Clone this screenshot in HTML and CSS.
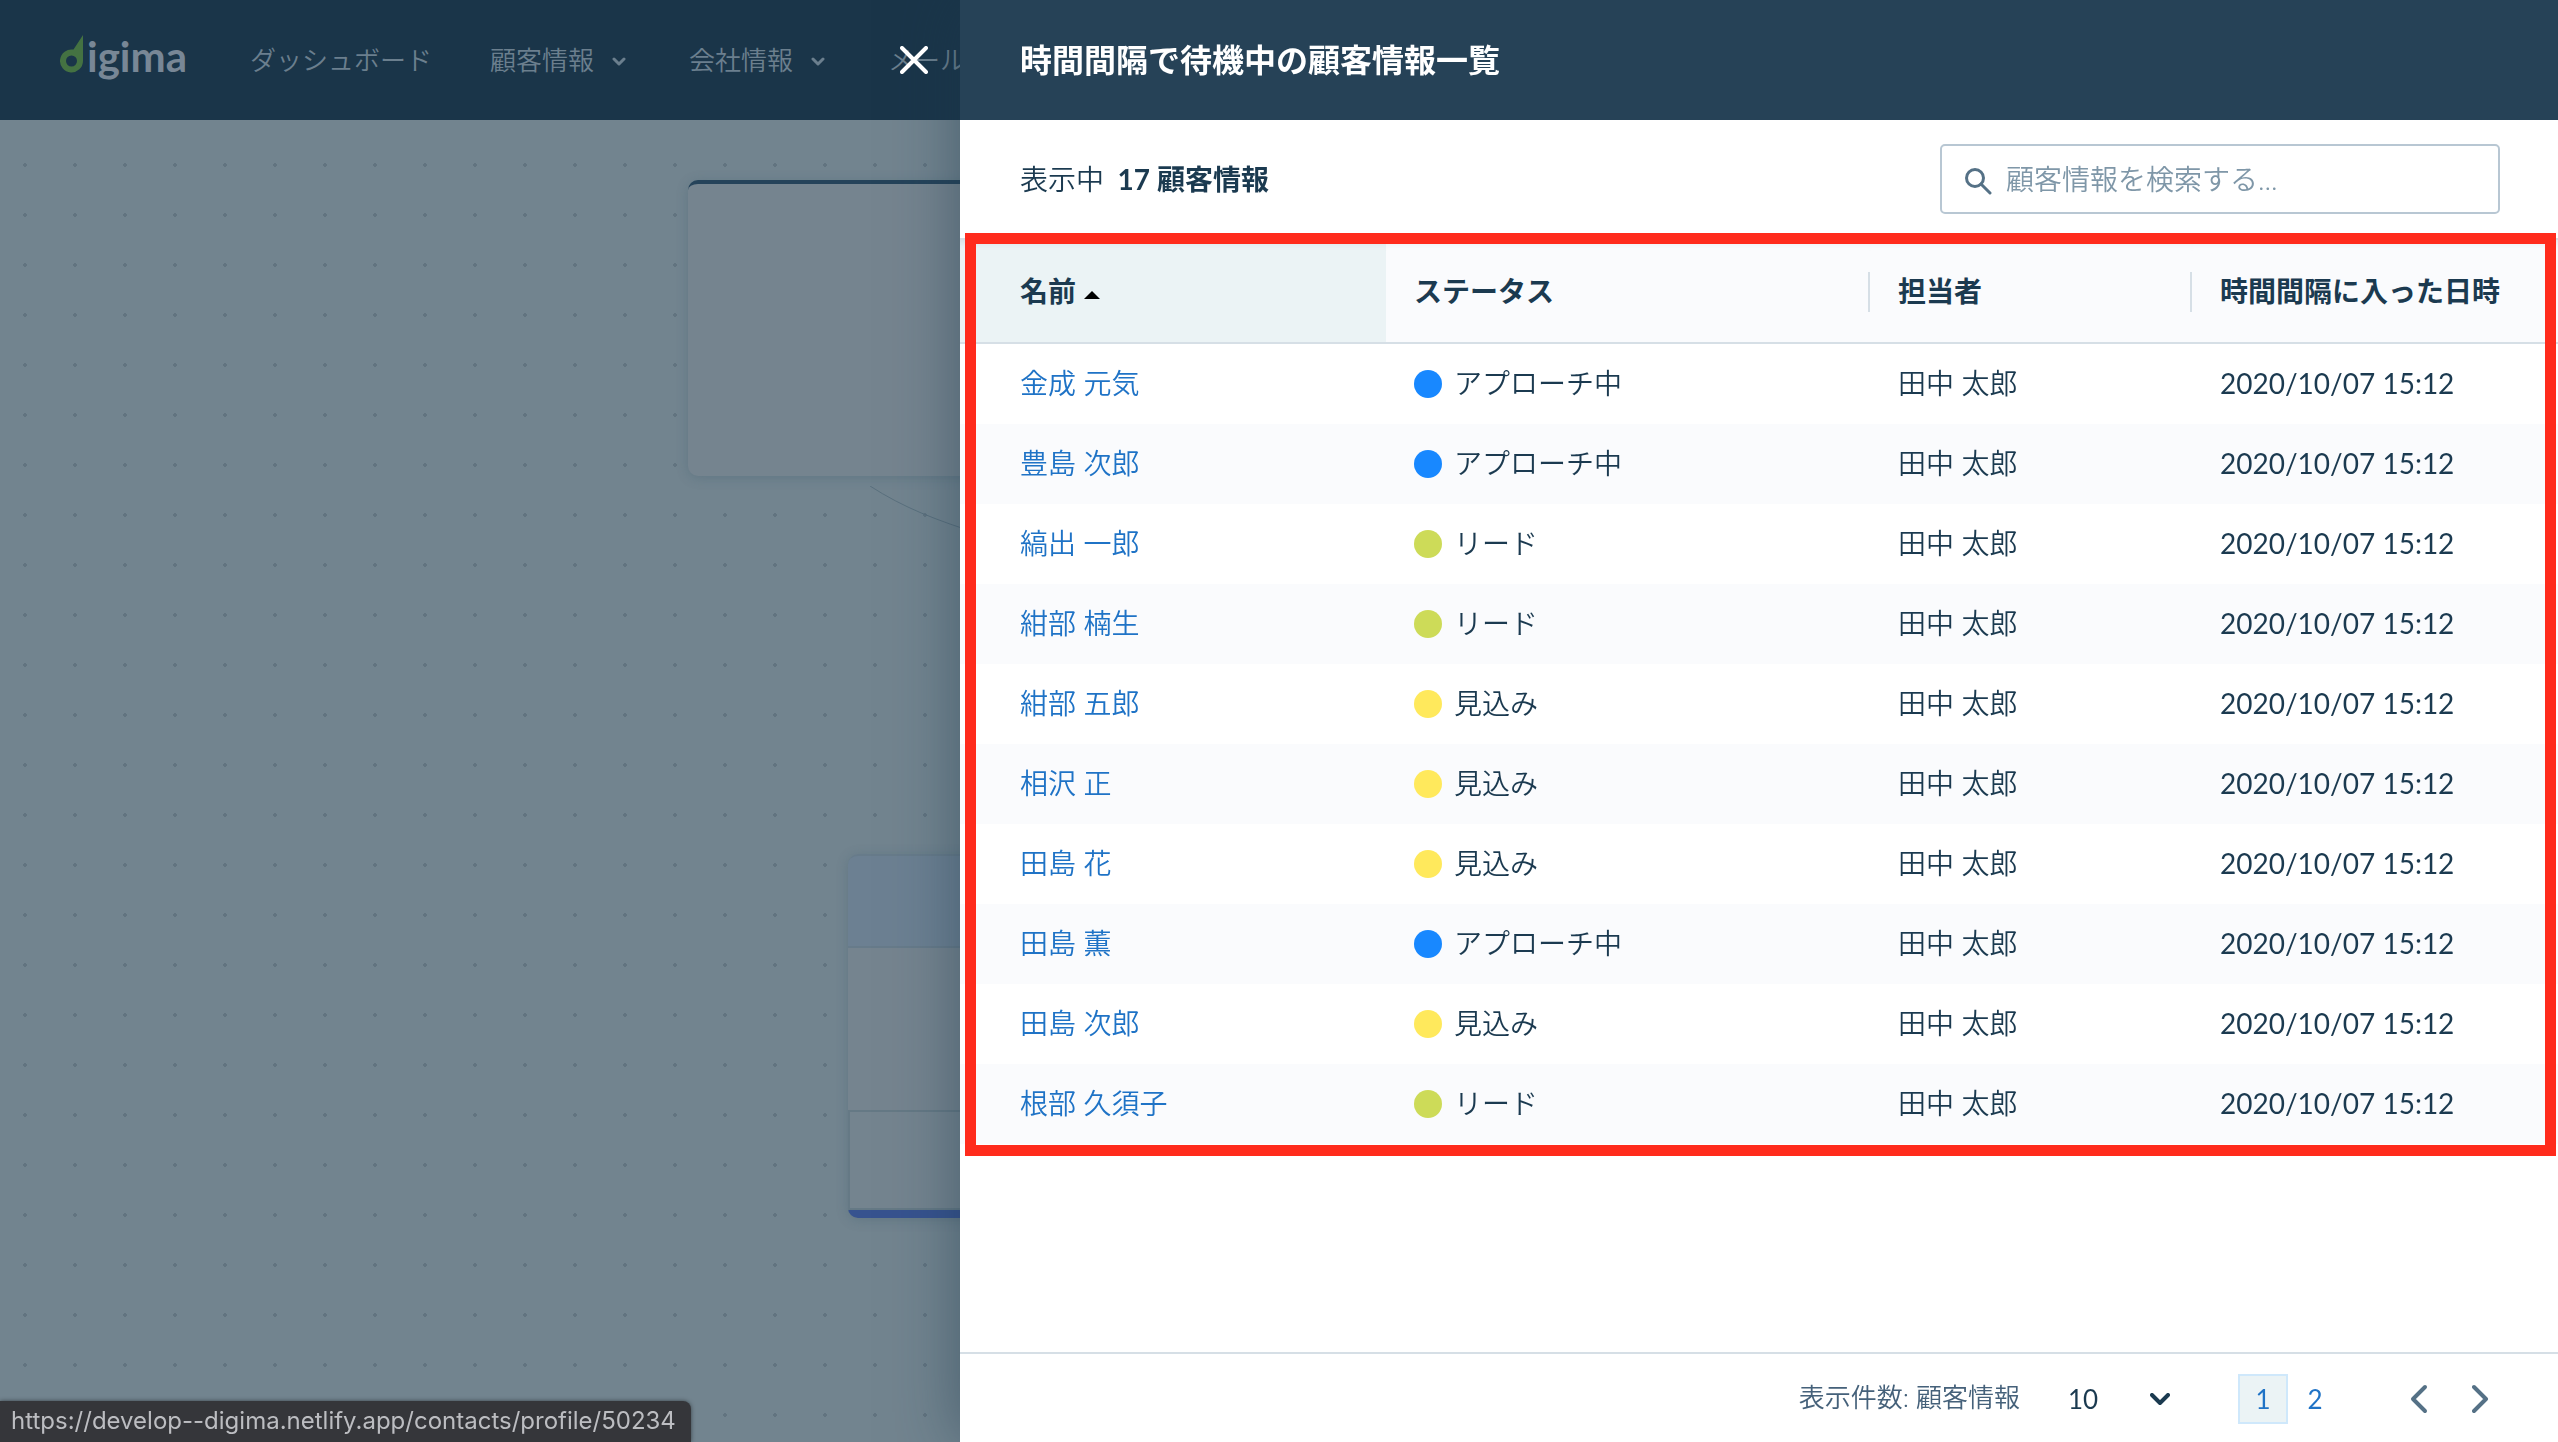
FILE: index.html
```html
<!DOCTYPE html>
<html lang="ja">
<head>
    <meta charset="UTF-8">
    <meta name="viewport" content="width=device-width, initial-scale=1.0">
    <title>digima</title>
    <link rel="stylesheet" href="styles.css">
</head>
<body>
    <header class="navbar">
        <a href="#" class="logo">
            <svg width="24" height="38" viewBox="0 0 24 38">
                <path fill="#447242" fill-rule="evenodd" d="M23 0V26A11.500 11.500 0 1 1 13.500 14.600ZM11.500 20.500A5.500 5.500 0 1 0 11.500 31.500A5.500 5.500 0 1 0 11.500 20.500Z"/>
            </svg>
            <span>igima</span>
        </a>
        <nav class="menu">
            <a href="#">ダッシュボード</a>
            <a href="#">顧客情報
                <svg width="14" height="10" viewBox="0 0 14 10"><path d="M2 2l5 5 5-5"/></svg>
            </a>
            <a href="#">会社情報
                <svg width="14" height="10" viewBox="0 0 14 10"><path d="M2 2l5 5 5-5"/></svg>
            </a>
            <a href="#">メール</a>
        </nav>
    </header>

    <main class="canvas">
        <div class="node node1"></div>
        <svg class="edge" width="240" height="60" viewBox="0 0 240 60"><path d="M0 0C34 22 66 34 110 48"/></svg>
        <div class="node node2">
            <div class="nodeHead"></div>
            <div class="nodeBody"></div>
            <div class="nodeFoot"></div>
        </div>
    </main>

    <section class="drawer">
        <button class="closeButton" aria-label="閉じる">
            <svg width="28" height="28" viewBox="0 0 28 28"><path d="M2 2l24 24M26 2L2 26"/></svg>
        </button>
        <h1 class="drawerTitle">時間間隔で待機中の顧客情報一覧</h1>
        <div class="toolbar">
            <p class="count">表示中 <strong>17 顧客情報</strong></p>
            <label class="search">
                <svg width="28" height="28" viewBox="0 0 28 28"><circle cx="11" cy="11" r="8.500"/><path d="M17 17l9 9"/></svg>
                <input type="text" placeholder="顧客情報を検索する..." aria-label="顧客情報を検索する">
            </label>
        </div>

        <div class="tableArea">
            <table class="contacts">
                <colgroup>
                    <col>
                    <col class="colStatus">
                    <col class="colOwner">
                    <col class="colDate">
                </colgroup>
                <thead>
                    <tr>
                        <th class="sorted">名前<span class="arrow"></span></th>
                        <th class="divider">ステータス</th>
                        <th class="divider">担当者</th>
                        <th>時間間隔に入った日時</th>
                    </tr>
                </thead>
                <tbody>
                    <tr>
                        <td><a href="#">金成 元気</a></td>
                        <td><span class="dot blue"></span>アプローチ中</td>
                        <td>田中 太郎</td>
                        <td>2020/10/07 15:12</td>
                    </tr>
                    <tr>
                        <td><a href="#">豊島 次郎</a></td>
                        <td><span class="dot blue"></span>アプローチ中</td>
                        <td>田中 太郎</td>
                        <td>2020/10/07 15:12</td>
                    </tr>
                    <tr>
                        <td><a href="#">縞出 一郎</a></td>
                        <td><span class="dot green"></span>リード</td>
                        <td>田中 太郎</td>
                        <td>2020/10/07 15:12</td>
                    </tr>
                    <tr>
                        <td><a href="#">紺部 楠生</a></td>
                        <td><span class="dot green"></span>リード</td>
                        <td>田中 太郎</td>
                        <td>2020/10/07 15:12</td>
                    </tr>
                    <tr>
                        <td><a href="#">紺部 五郎</a></td>
                        <td><span class="dot yellow"></span>見込み</td>
                        <td>田中 太郎</td>
                        <td>2020/10/07 15:12</td>
                    </tr>
                    <tr>
                        <td><a href="#">相沢 正</a></td>
                        <td><span class="dot yellow"></span>見込み</td>
                        <td>田中 太郎</td>
                        <td>2020/10/07 15:12</td>
                    </tr>
                    <tr>
                        <td><a href="#">田島 花</a></td>
                        <td><span class="dot yellow"></span>見込み</td>
                        <td>田中 太郎</td>
                        <td>2020/10/07 15:12</td>
                    </tr>
                    <tr>
                        <td><a href="#">田島 薫</a></td>
                        <td><span class="dot blue"></span>アプローチ中</td>
                        <td>田中 太郎</td>
                        <td>2020/10/07 15:12</td>
                    </tr>
                    <tr>
                        <td><a href="#">田島 次郎</a></td>
                        <td><span class="dot yellow"></span>見込み</td>
                        <td>田中 太郎</td>
                        <td>2020/10/07 15:12</td>
                    </tr>
                    <tr>
                        <td><a href="#">根部 久須子</a></td>
                        <td><span class="dot green"></span>リード</td>
                        <td>田中 太郎</td>
                        <td>2020/10/07 15:12</td>
                    </tr>
                </tbody>
            </table>
            <div class="highlight"></div>
        </div>

        <footer class="pager">
            <label for="perPage">表示件数: 顧客情報</label>
            <div class="selectBox">
                <select id="perPage">
                    <option>10</option>
                    <option>20</option>
                    <option>50</option>
                </select>
                <svg width="20" height="14" viewBox="0 0 20 14"><path d="M2 2l8 8 8-8"/></svg>
            </div>
            <div class="pages">
                <button class="page current">1</button>
                <button class="page">2</button>
            </div>
            <div class="arrows">
                <button class="step" aria-label="前へ">
                    <svg width="18" height="30" viewBox="0 0 18 30"><path d="M15 3L3 15l12 12"/></svg>
                </button>
                <button class="step" aria-label="次へ">
                    <svg width="18" height="30" viewBox="0 0 18 30"><path d="M2 3l12 12L2 27"/></svg>
                </button>
            </div>
        </footer>
    </section>

    <div class="statusBar">https://develop--digima.netlify.app/contacts/profile/50234</div>
</body>
</html>
```
FILE: styles.css
```css
* {
    box-sizing: border-box;
}
body {
    margin: 0;
    height: 100vh;
    display: flex;
    flex-direction: column;
    overflow: hidden;
    font-family: Lato, "Noto Sans CJK JP", sans-serif;
    font-size: 28px;
    line-height: 40px;
    color: #1b3a50;
}
a {
    text-decoration: none;
}
button {
    padding: 0;
    border: none;
    background: none;
    font: inherit;
    cursor: pointer;
}
svg {
    display: block;
    flex: none;
}
svg path, svg circle {
    stroke-linecap: round;
    stroke-linejoin: round;
}

/* page behind the drawer */
.navbar {
    flex: none;
    height: 120px;
    padding: 0 60px;
    display: flex;
    align-items: center;
    gap: 60px;
    background-color: #1a3549;
}
.logo {
    display: flex;
    align-items: center;
    gap: 3px;
    width: 130px;
    color: #788796;
    font-size: 42px;
    font-weight: 700;
}
.logo svg {
    margin-bottom: 12px;
}
.logo span {
    margin-bottom: 8px;
}
.menu {
    display: flex;
    gap: 58px;
    font-size: 26px;
    font-weight: 350;
    white-space: nowrap;
}
.menu a {
    display: flex;
    align-items: center;
    gap: 18px;
    color: #6b7f8e;
}
.menu svg {
    margin: 4px 5px 0 0;
}
.menu svg path {
    fill: none;
    stroke: #6b7f8e;
    stroke-width: 3;
}
.canvas {
    flex: 1;
    position: relative;
    background-color: #72848f;
    background-image: radial-gradient(circle, #627480 2px, transparent 2px);
    background-size: 50px 50px;
    background-position: 0 20px;
}
.node {
    position: absolute;
    width: 400px;
    border-radius: 10px;
    background-color: #75848f;
    box-shadow: 0 2px 12px rgba(60, 88, 106, 0.3);
}
.node1 {
    left: 688px;
    top: 60px;
    height: 296px;
    border-top: 4px solid #25435a;
}
.node2 {
    left: 848px;
    top: 734px;
    border-bottom: 8px solid #37538f;
}
.nodeHead {
    height: 94px;
    border-radius: 10px 10px 0 0;
    border-top: 2px solid #677b8a;
    border-bottom: 2px solid #677b8a;
    background-color: #6c8092;
}
.nodeBody {
    height: 162px;
}
.nodeFoot {
    height: 100px;
    border: 2px solid #657985;
    background-color: #74848f;
}
.edge {
    position: absolute;
    left: 870px;
    top: 366px;
}
.edge path {
    fill: none;
    stroke: #5a707e;
    stroke-width: 1;
}

/* drawer */
.drawer {
    position: fixed;
    top: 0;
    bottom: 0;
    left: 960px;
    right: 0;
    display: flex;
    flex-direction: column;
    background-color: #fff;
    box-shadow: 0 0 60px rgba(26, 53, 73, 0.5);
}
.closeButton {
    position: absolute;
    left: -60px;
    top: 46px;
}
.closeButton path {
    fill: none;
    stroke: #fff;
    stroke-width: 4;
}
.drawerTitle {
    flex: none;
    margin: 0;
    height: 120px;
    padding: 0 60px;
    display: flex;
    align-items: center;
    background-color: #264257;
    color: #fff;
    font-size: 32px;
    font-weight: 700;
}
.toolbar {
    flex: none;
    height: 118px;
    padding: 0 58px 0 60px;
    display: flex;
    align-items: center;
    justify-content: space-between;
}
.count {
    margin: 0;
    font-weight: 350;
}
.count strong {
    margin-left: 6px;
    font-weight: 700;
}
.search {
    width: 560px;
    height: 70px;
    padding: 0 22px;
    display: flex;
    align-items: center;
    gap: 14px;
    border: 2px solid #b8c7d3;
    border-radius: 5px;
}
.search svg {
    margin-top: 4px;
}
.search path, .search circle {
    fill: none;
    stroke: #557186;
    stroke-width: 3;
}
.search input {
    flex: 1;
    min-width: 0;
    padding: 0;
    border: none;
    outline: none;
    background: none;
    font: inherit;
    font-weight: 350;
    color: #1b3a50;
}
.search input::placeholder {
    color: #7f97a8;
    opacity: 1;
}
.tableArea {
    flex: 1;
    position: relative;
    border-top: 2px solid #d6dfe6;
}
.contacts {
    width: 100%;
    table-layout: fixed;
    border-collapse: separate;
    border-spacing: 0;
}
.colStatus {
    width: 484px;
}
.colOwner {
    width: 322px;
}
.colDate {
    width: 366px;
}
th, td {
    padding: 0 0 0 28px;
    text-align: left;
    white-space: nowrap;
}
th:first-child, td:first-child {
    padding-left: 60px;
}
th {
    position: relative;
    height: 104px;
    border-bottom: 2px solid #d6dfe6;
    background-color: #fafbfd;
    box-shadow: inset 0 10px 8px -8px rgba(27, 58, 80, 0.12);
    font-weight: 700;
}
th.sorted {
    background-color: #ebf3f5;
}
th.divider::after {
    content: "";
    position: absolute;
    right: 0;
    top: 32px;
    width: 2px;
    height: 40px;
    background-color: #d6dfe6;
}
.arrow {
    display: inline-block;
    margin-left: 8px;
    vertical-align: 3px;
    border: 8px solid transparent;
    border-top: none;
    border-bottom-color: #000;
}
td {
    height: 80px;
    padding-bottom: 2px;
    font-weight: 350;
}
td:last-child {
    font-weight: 400;
}
tbody tr:nth-child(even) {
    background-color: #fafbfd;
}
td a {
    color: #1f73c6;
}
.dot {
    display: inline-block;
    width: 28px;
    height: 28px;
    margin-right: 12px;
    border-radius: 50%;
    vertical-align: -4px;
}
.blue {
    background-color: #1888ff;
}
.green {
    background-color: #cddb58;
}
.yellow {
    background-color: #ffe95c;
}
.highlight {
    position: absolute;
    left: 5px;
    right: 2px;
    top: -7px;
    height: 923px;
    border: 11px solid #ff2b1c;
    pointer-events: none;
}
.pager {
    flex: none;
    height: 90px;
    padding: 2px 68px 0;
    display: flex;
    align-items: center;
    justify-content: flex-end;
    border-top: 2px solid #d6dfe6;
    font-size: 26px;
}
.pager label {
    margin-bottom: 4px;
    color: #45617a;
    font-weight: 350;
}
.selectBox {
    position: relative;
    width: 104px;
    margin-left: 48px;
}
.selectBox select {
    appearance: none;
    width: 100%;
    height: 50px;
    padding: 0;
    border: none;
    background: none;
    font: inherit;
    color: #1b3a50;
}
.selectBox svg {
    position: absolute;
    right: 2px;
    top: 19px;
    pointer-events: none;
}
.selectBox path {
    fill: none;
    stroke: #1b3a50;
    stroke-width: 4;
}
.pages {
    display: flex;
    gap: 2px;
    margin-left: 66px;
}
.page {
    width: 50px;
    height: 50px;
    border: 2px solid transparent;
    color: #1f73c6;
}
.page.current {
    border-color: #cfe8fb;
    background-color: #ebf3f5;
}
.arrows {
    display: flex;
    gap: 44px;
    margin-left: 70px;
}
.step path {
    fill: none;
    stroke: #557186;
    stroke-width: 4;
}

/* link preview of the browser */
.statusBar {
    position: fixed;
    left: 0;
    bottom: 0;
    height: 41px;
    padding: 0 15px 0 11px;
    border-top-right-radius: 8px;
    background-color: #35363a;
    box-shadow: 0 0 4px rgba(0, 0, 0, 0.5);
    color: #bcbdc1;
    font-family: Inter, sans-serif;
    font-size: 24px;
}
```
